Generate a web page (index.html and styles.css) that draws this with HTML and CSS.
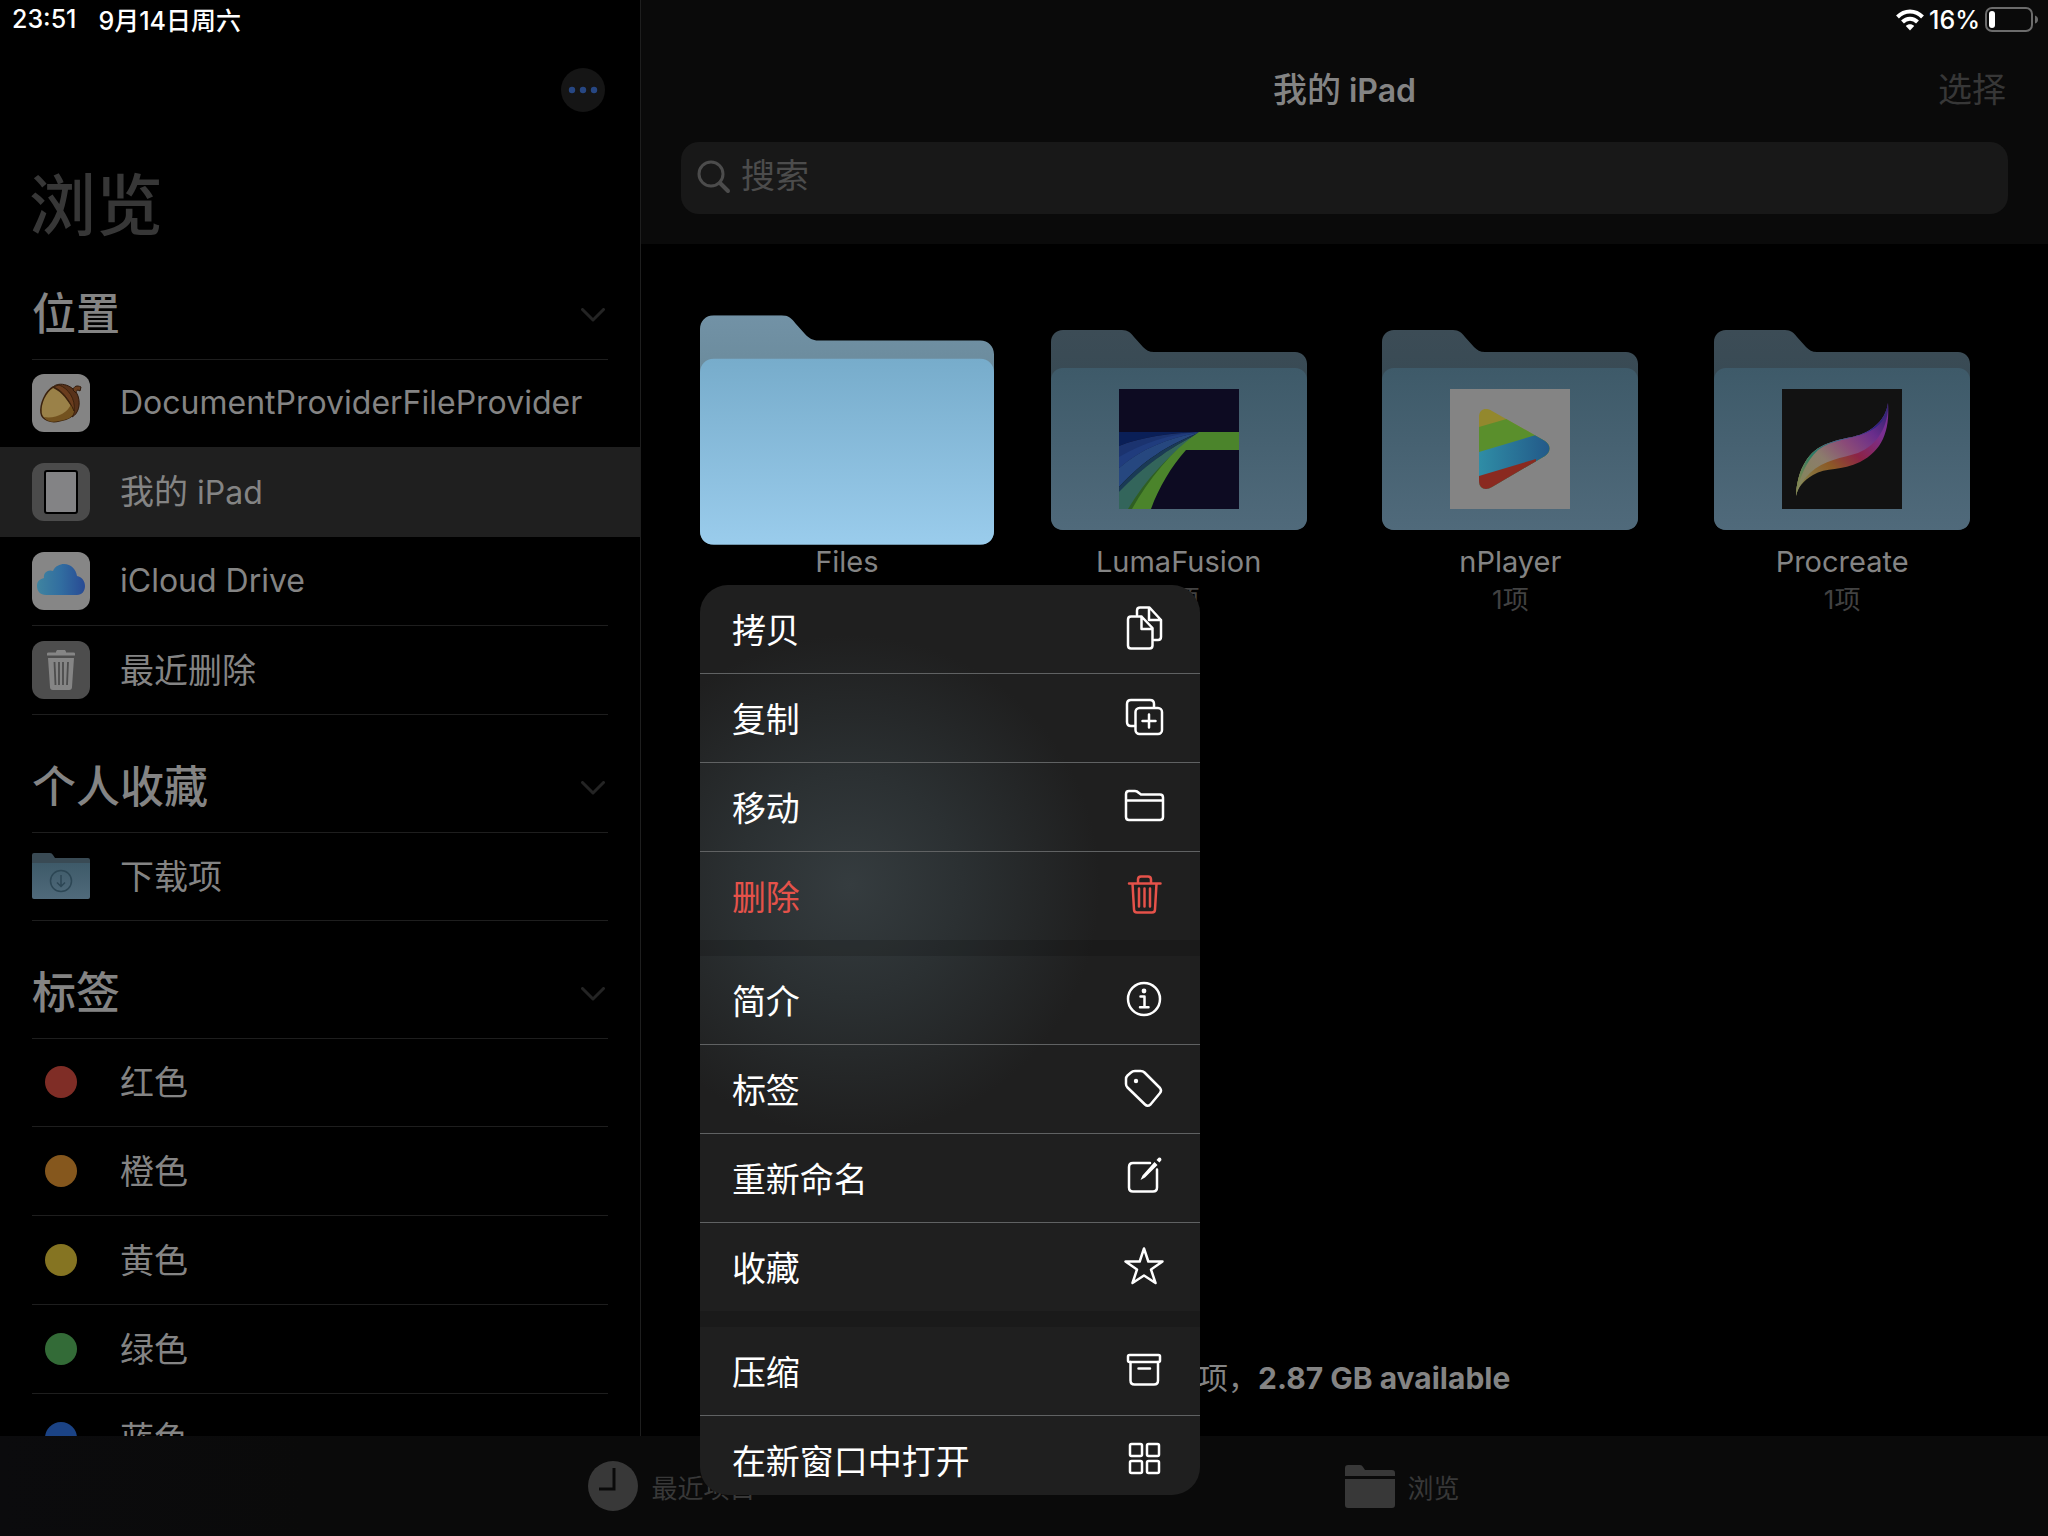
FILE: index.html
```
<!DOCTYPE html>
<html lang="zh-Hans">
<head>
  <meta charset="UTF-8">
  <meta name="viewport" content="width=device-width, initial-scale=1.0">
  <title>文件 - 我的 iPad</title>
  <link rel="stylesheet" href="styles.css">
</head>
<body>
  <!-- 共用图形 -->
  <svg class="defs" width="0" height="0" aria-hidden="true">
    <defs>
      <linearGradient id="backDim" x1="0" y1="0" x2="0" y2="1">
        <stop offset="0" stop-color="#3c4c56"/><stop offset=".25" stop-color="#384a54"/>
      </linearGradient>
      <linearGradient id="frontDim" x1="0" y1="0" x2="0" y2="1">
        <stop offset="0" stop-color="#3e5a69"/><stop offset="1" stop-color="#506a7b"/>
      </linearGradient>
      <linearGradient id="backLit" x1="0" y1="0" x2="0" y2="1">
        <stop offset="0" stop-color="#7292a6"/><stop offset=".25" stop-color="#6b8b9c"/>
      </linearGradient>
      <linearGradient id="frontLit" x1="0" y1="0" x2="0" y2="1">
        <stop offset="0" stop-color="#77accb"/><stop offset="1" stop-color="#9accec"/>
      </linearGradient>
    </defs>
    <symbol id="chevron" viewBox="0 0 24 14">
      <path d="M1.5 1.5 12 12 22.5 1.5" fill="none" stroke="currentColor" stroke-width="3" stroke-linecap="round" stroke-linejoin="round"/>
    </symbol>
    <symbol id="folderBack" viewBox="0 0 256 200">
      <path d="M12 0H71C77 0 80 3 83 7L92 17C95 20 98 22 103 22H244C251 22 256 27 256 34V188C256 195 251 200 244 200H12C5 200 0 195 0 188V12C0 5 5 0 12 0Z"/>
    </symbol>
    <symbol id="folderFront" viewBox="0 0 256 200">
      <path d="M12 38H244C251 38 256 43 256 50V188C256 195 251 200 244 200H12C5 200 0 195 0 188V50C0 43 5 38 12 38Z"/>
    </symbol>
  </svg>

  <aside class="sidebar">
    <div class="status">
      <span>23:51</span>
      <span>9月14日周六</span>
    </div>
    <div class="sidebar-bar">
      <button class="more" aria-label="更多">
        <svg width="44" height="44" viewBox="0 0 44 44"><circle cx="11" cy="22" r="3.2"/><circle cx="22" cy="22" r="3.2"/><circle cx="33" cy="22" r="3.2"/></svg>
      </button>
    </div>
    <h1>浏览</h1>

    <section>
      <button class="group"><span>位置</span><svg class="chevron"><use href="#chevron"/></svg></button>
      <ul>
        <li><a class="row" href="#">
          <svg class="icon" viewBox="0 0 58 58">
            <rect width="58" height="58" rx="12" fill="#848484"/>
            <path d="M21 13C27 7 42 11 46 22C49 31 46 40 40 43Z" fill="#58321a" stroke="#2f190b"/>
            <path d="M41 16C42 12 45 11 49 13L48 17C45 15 44 17 44 19Z" fill="#6a3f20" stroke="#2f190b"/>
            <path d="M21 13C13 18 8 30 9 39C10 46 19 49 27 47C36 46 42 42 42 37C38 27 30 17 21 13Z" fill="#9a8148" stroke="#3b220d" stroke-width="1.5"/>
            <path d="M12 43C23 45 36 39 39 30L42 37C42 43 35 46 27 47C20 49 14 47 12 43Z" fill="#73521f"/>
            <path d="M21 13C29 15 37 25 42 37C44 25 36 14 27 11Z" fill="#6b3d1e" stroke="#3b220d"/>
          </svg>
          <span class="latin">DocumentProviderFileProvider</span></a></li>
        <li><a class="row selected" href="#">
          <svg class="icon" viewBox="0 0 58 58">
            <rect width="58" height="58" rx="12" fill="#4b4b4b"/>
            <rect x="13" y="8" width="32" height="42" rx="2" fill="#838385" stroke="#000" stroke-width="2"/>
          </svg>
          <span>我的<span class="latin"> iPad</span></span></a></li>
        <li><a class="row" href="#">
          <svg class="icon" viewBox="0 0 58 58">
            <defs><linearGradient id="cloud" x1="0" y1="0" x2="1" y2="0"><stop offset="0" stop-color="#3f84a0"/><stop offset=".5" stop-color="#316da0"/><stop offset="1" stop-color="#284a94"/></linearGradient></defs>
            <rect width="58" height="58" rx="12" fill="#868686"/>
            <path d="M14 43C8 43 5 39 5 34C5 29 8 27 12 26C11 20 17 17 21 19C23 14 28 12 32 12C39 12 44 17 45 24C50 25 53 29 53 34C53 39 50 43 45 43Z" fill="url(#cloud)"/>
          </svg>
          <span class="latin">iCloud Drive</span></a></li>
        <li><a class="row" href="#">
          <svg class="icon" viewBox="0 0 58 58">
            <rect width="58" height="58" rx="12" fill="#4d4d4d"/>
            <path d="M15 14V12.500Q15 11.500 16.500 11.500H24C24 9.500 25 9 26 9H32C33 9 34 9.500 34 11.500H41.500Q43 11.500 43 12.500V14.500H15ZM16 17H42L40 46Q40 49 37 49H21Q18 49 18 46Z" fill="#858585"/>
            <path d="M22.500 21 23.500 44M27 21V44M31 21V44M36 21 35 44" stroke="#4d4d4d" stroke-width="1.800"/>
          </svg>
          <span>最近删除</span></a></li>
      </ul>
    </section>

    <section>
      <button class="group"><span>个人收藏</span><svg class="chevron"><use href="#chevron"/></svg></button>
      <ul>
        <li><a class="row" href="#">
          <svg class="icon" viewBox="0 0 58 58">
            <path d="M2 6H18Q20 6 21 8L23 11H56Q58 11 58 13V20H0V8Q0 6 2 6Z" fill="#394a54"/>
            <path d="M0 16H58V50Q58 52 56 52H2Q0 52 0 50Z" fill="url(#frontDim)"/>
            <circle cx="29" cy="34" r="10.500" fill="none" stroke="#2c4654" stroke-width="1.500"/>
            <path d="M29 28V39M25 35.500 29 39.500 33 35.500" fill="none" stroke="#2c4654" stroke-width="1.500"/>
          </svg>
          <span>下载项</span></a></li>
      </ul>
    </section>

    <section>
      <button class="group"><span>标签</span><svg class="chevron"><use href="#chevron"/></svg></button>
      <ul>
        <li><a class="row" href="#"><i class="tag red"></i><span>红色</span></a></li>
        <li><a class="row" href="#"><i class="tag orange"></i><span>橙色</span></a></li>
        <li><a class="row" href="#"><i class="tag yellow"></i><span>黄色</span></a></li>
        <li><a class="row" href="#"><i class="tag green"></i><span>绿色</span></a></li>
        <li><a class="row" href="#"><i class="tag blue"></i><span>蓝色</span></a></li>
      </ul>
    </section>
  </aside>

  <main>
    <header>
      <div class="status right">
        <svg width="28" height="22" viewBox="0 0 28 22" fill="none" stroke="#fff" stroke-width="4">
          <path d="M1.500 8C8.500 .8 19.500 .8 26.500 8"/>
          <path d="M6.500 13C10.700 8.700 17.300 8.700 21.500 13"/>
          <path d="M14 21.500 9.800 17C12 14.600 16 14.600 18.200 17Z" fill="#fff" stroke="none"/>
        </svg>
        <span>16%</span>
        <svg width="54" height="26" viewBox="0 0 54 26">
          <rect x="1" y="1" width="46" height="23" rx="6" fill="none" stroke="#6c6c6c" stroke-width="2"/>
          <rect x="4" y="4" width="6" height="17" rx="3" fill="#fff"/>
          <path d="M50 8.500Q53 9.500 53 12.500T50 16.500Z" fill="#6c6c6c"/>
        </svg>
      </div>
      <div class="titlebar">
        <h2>我的<span class="latin"> iPad</span></h2>
        <button class="select">选择</button>
      </div>
      <label class="search">
        <svg width="34" height="34" viewBox="0 0 34 34" fill="none" stroke="#4c4c4c" stroke-linecap="round">
          <circle cx="14" cy="14" r="12" stroke-width="3"/><path d="M23 23 31 31" stroke-width="4"/>
        </svg>
        <input type="search" placeholder="搜索" aria-label="搜索">
      </label>
    </header>

    <ul class="files">
      <li class="file active">
        <div class="cover">
          <svg class="folder lit" viewBox="0 0 256 200">
            <use href="#folderBack" fill="url(#backLit)"/><use href="#folderFront" fill="url(#frontLit)"/>
          </svg>
          <!-- 长按菜单 -->
          <div class="menu" role="menu">
            <div class="menu-group">
              <button role="menuitem">拷贝
                <svg viewBox="0 0 44 44"><path d="M19.500 10.500H9Q6 10.500 6 13.500V39.500Q6 42.500 9 42.500H27.500Q30.500 42.500 30.500 39.500V22ZM19.500 10.500V23H30.500"/><path d="M15 9V4.500Q15 1.500 18 1.500H27.500L39 14V31Q39 34 36 34H32M27 1.500V14H39"/></svg>
              </button>
              <button role="menuitem">复制
                <svg viewBox="0 0 44 44"><rect x="13.500" y="13" width="26.500" height="26" rx="4"/><path d="M13 31H9Q5 31 5 27V9Q5 5 9 5H28Q32 5 32 9V12M27 19.500V32.500M20.500 26H33.500"/></svg>
              </button>
              <button role="menuitem">移动
                <svg viewBox="0 0 44 44"><path d="M4 16.500V10Q4 7 7 7H13Q15 7 17 9L19 10.500H38Q41 10.500 41 13.500V33Q41 36 38 36H7Q4 36 4 33ZM4 16.500H41"/></svg>
              </button>
              <button role="menuitem" class="danger">删除
                <svg viewBox="0 0 44 44"><path d="M7 10.500H38.500M16 10V6.500Q16 3.500 19 3.500H26Q29 3.500 29 6.500V10M10.500 10.500 12 36.500Q12 39.500 15 39.500H30Q33 39.500 33 36.500L34.500 10.500M17 15.500V33.500M22.500 15.500V33.500M28 15.500V33.500"/></svg>
              </button>
            </div>
            <div class="menu-group">
              <button role="menuitem">简介
                <svg viewBox="0 0 44 44"><circle cx="22" cy="22" r="16"/><circle class="dot" cx="22" cy="14" r="2.400"/><path d="M18.500 19.500H22.500V30M18 30.200H26.500"/></svg>
              </button>
              <button role="menuitem">标签
                <svg viewBox="0 0 44 44"><path d="M4 13Q4 11 5.500 9.500L9 6.500Q10.500 5 13 5H18.500Q21 5 22.500 6.500L38 22Q40 24.500 38 27L28.500 38.500Q25.500 41 23 38.500L5.500 21.500Q4 20 4 18Z"/><circle class="dot" cx="14" cy="15" r="2.200"/></svg>
              </button>
              <button role="menuitem">重新命名
                <svg viewBox="0 0 44 44"><path d="M28 8H11Q7 8 7 12V32.500Q7 36.500 11 36.500H31Q35 36.500 35 32.500V14.500"/><path class="dot" d="M18.500 25 20.500 20.500 32.500 7 35.500 10 23 22.500ZM34.500 5 36.500 2.700Q39.500 2 39.500 5L37.500 7.500Z"/></svg>
              </button>
              <button role="menuitem">收藏
                <svg viewBox="0 0 44 44"><path d="M22 4.500 26.300 17.500H40.500L29 25.500 33.500 39 22 31.500 10.500 39 15 25.500 3.500 17.500H17.700Z"/></svg>
              </button>
            </div>
            <div class="menu-group">
              <button role="menuitem">压缩
                <svg viewBox="0 0 44 44"><rect x="6" y="7" width="32" height="7" rx="1.500"/><path d="M8.500 14V32.500Q8.500 36.500 12.500 36.500H32Q36 36.500 36 32.500V14M16.500 20.500H28"/></svg>
              </button>
              <button role="menuitem">在新窗口中打开
                <svg viewBox="0 0 44 44"><rect x="8" y="7" width="12" height="12" rx="1.500"/><rect x="25" y="7" width="12" height="12" rx="1.500"/><rect x="8" y="24" width="12" height="12" rx="1.500"/><rect x="25" y="24" width="12" height="12" rx="1.500"/></svg>
              </button>
            </div>
          </div>
        </div>
        <p class="name">Files</p>
      </li>
      <li class="file">
        <div class="cover">
          <svg class="folder" viewBox="0 0 256 200">
            <use href="#folderBack" fill="url(#backDim)"/><use href="#folderFront" fill="url(#frontDim)"/>
            <g transform="translate(68 59)">
              <rect width="120" height="120" fill="#0d0b22"/>
              <path d="M0 43H82C50 44 22 48 0 57Z" fill="#0a1f57"/>
              <path d="M0 57C22 48 50 44 82 43C48 49 22 60 0 79Z" fill="#1b336f"/>
              <path d="M0 68C24 54 50 45 82 43C48 49 22 60 0 79Z" fill="#203c7d"/>
              <path d="M0 79C22 60 48 49 82 43C48 56 24 72 0 98Z" fill="#26477f"/>
              <path d="M0 98C24 72 48 56 82 43C48 60 24 78 0 104Z" fill="#1a3a55"/>
              <path d="M0 103C24 78 48 60 82 43C52 66 28 92 11 120H0Z" fill="#33655b"/>
              <path d="M9 120C26 92 50 64 82 43L76 50C50 72 32 96 18 120Z" fill="#2f5f22"/>
              <path d="M13 120C30 90 52 62 80 43H120V61H67C52 78 40 98 32 120Z" fill="#4b842b"/>
            </g>
          </svg>
        </div>
        <p class="name">LumaFusion</p>
        <p class="count">2项</p>
      </li>
      <li class="file">
        <div class="cover">
          <svg class="folder" viewBox="0 0 256 200">
            <defs>
              <clipPath id="play"><path d="M29 28C29 20 36 18 42 22L95 52C101 56 101 63 95 67L42 98C36 102 29 100 29 92Z"/></clipPath>
              <linearGradient id="playBlue"><stop offset="0" stop-color="#2f8da6"/><stop offset="1" stop-color="#1f4a80"/></linearGradient>
            </defs>
            <use href="#folderBack" fill="url(#backDim)"/><use href="#folderFront" fill="url(#frontDim)"/>
            <g transform="translate(68 59)">
              <rect width="120" height="120" fill="#848484"/>
              <g clip-path="url(#play)">
                <rect width="120" height="120" fill="#93882d"/>
                <path d="M29 38 60 29 120 10V120H29Z" fill="#5a8f2c"/>
                <path d="M29 63 86 46H120V120H29Z" fill="url(#playBlue)"/>
                <path d="M29 87 86 70V120H29Z" fill="#8a2a20"/>
              </g>
            </g>
          </svg>
        </div>
        <p class="name">nPlayer</p>
        <p class="count">1项</p>
      </li>
      <li class="file">
        <div class="cover">
          <svg class="folder" viewBox="0 0 256 200">
            <defs>
              <linearGradient id="feather" x1="0" y1="1" x2="1" y2="0">
                <stop offset=".1" stop-color="#85855c"/><stop offset=".35" stop-color="#8c7c6c"/><stop offset=".55" stop-color="#8a4a78"/><stop offset=".75" stop-color="#6a2d8c"/><stop offset="1" stop-color="#25206a"/>
              </linearGradient>
              <linearGradient id="featherTop" x1="0" y1="1" x2="1" y2="0">
                <stop offset=".1" stop-color="#7c8650"/><stop offset=".3" stop-color="#2d7c62"/><stop offset=".55" stop-color="#2a6a92"/><stop offset=".8" stop-color="#2c2384"/><stop offset="1" stop-color="#3a2a70"/>
              </linearGradient>
              <linearGradient id="featherLow" x1="0" y1="1" x2="1" y2="0">
                <stop offset=".1" stop-color="#85804a"/><stop offset=".35" stop-color="#8c5a26"/><stop offset=".55" stop-color="#8c2346"/><stop offset=".8" stop-color="#7a2f92"/>
              </linearGradient>
            </defs>
            <use href="#folderBack" fill="url(#backDim)"/><use href="#folderFront" fill="url(#frontDim)"/>
            <g transform="translate(68 59)">
              <rect width="120" height="120" fill="#121212"/>
              <path d="M14 107C15 84 24 64 42 56C62 47 78 50 92 38C101 31 105 22 106 14C108 42 100 62 78 73C60 82 44 78 31 86C21 92 16 98 14 107Z" fill="url(#featherLow)"/>
              <path d="M14 107C15 84 24 64 42 56C62 47 78 50 92 38C101 31 105 22 106 14C107 36 96 56 76 64C60 69 42 71 28 84C20 92 16 99 14 107Z" fill="url(#feather)"/>
              <path d="M14 107C15 84 24 64 42 56C62 47 78 50 92 38C101 31 105 22 106 14C106 28 98 38 84 44C68 51 50 50 36 61C24 72 17 90 14 107Z" fill="url(#featherTop)"/>
            </g>
          </svg>
        </div>
        <p class="name">Procreate</p>
        <p class="count">1项</p>
      </li>
    </ul>

    <p class="summary"><span>4项，</span>2.87 GB available</p>
  </main>

  <nav class="tabs">
    <a href="#">
      <svg width="50" height="50" viewBox="0 0 50 50"><circle cx="25" cy="25" r="25" fill="#383838"/><path d="M26 7V28H11" fill="none" stroke="#0a0a0a" stroke-width="3"/></svg>
      最近项目</a>
    <a href="#">
      <svg width="50" height="50" viewBox="0 0 50 50" fill="#383838"><path d="M3 4H15Q17 4 18 6L20 9H47Q50 9 50 12V15H0V7Q0 4 3 4ZM0 18H50V44Q50 47 47 47H3Q0 47 0 44Z"/></svg>
      浏览</a>
  </nav>
</body>
</html>
```
FILE: styles.css
```
* { box-sizing: border-box; }
body {
  margin: 0;
  height: 100vh;
  display: grid;
  grid-template-columns: 641px 1fr;
  grid-template-rows: minmax(0, 1fr) 100px;
  background: #000;
  color: #848484;
  font-family: Inter, "Noto Sans CJK SC", sans-serif;
  font-size: 34px;
  overflow: hidden;
}
h1, h2, p, ul { margin: 0; padding: 0; }
ul { list-style: none; }
a { color: inherit; text-decoration: none; }
button, input {
  font: inherit;
  color: inherit;
  background: none;
  border: 0;
  padding: 0;
}
svg { flex: none; display: block; }
.defs { position: absolute; }
.latin { font-size: 32px; }

.status {
  display: flex;
  align-items: center;
  gap: 22px;
  height: 40px;
  padding: 0 12px 2px;
  color: #fff;
  font-size: 25px;
  font-weight: 500;
}
.status.right {
  justify-content: flex-end;
  gap: 5px;
  padding: 0 9px;
}

/* 侧边栏 */
.sidebar {
  border-right: 1px solid #1e1e1e;
  overflow: hidden;
}
.sidebar-bar {
  display: flex;
  justify-content: flex-end;
  align-items: center;
  height: 100px;
  padding: 0 35px;
}
.more {
  border-radius: 50%;
  background: #151515;
}
.more svg { fill: #274783; }
h1 {
  height: 102px;
  padding: 16px 0 0 29px;
  color: #373737;
  font-size: 67px;
  font-weight: 500;
  line-height: 100px;
}
.group {
  display: flex;
  justify-content: space-between;
  align-items: center;
  width: calc(100% - 64px);
  height: 118px;
  margin: 0 32px;
  padding-top: 28px;
  border-bottom: 1px solid #1e1e1e;
  font-size: 44px;
  font-weight: 500;
}
.group span { padding-bottom: 8px; }
.group + ul { margin-top: -1px; }
.chevron {
  width: 24px;
  height: 14px;
  margin-right: 3px;
  color: #242424;
}
.row {
  display: flex;
  align-items: center;
  gap: 30px;
  height: 89px;
  margin: 0 32px;
  border-bottom: 1px solid #1e1e1e;
  white-space: nowrap;
}
.row > span { padding-bottom: 4px; }
.row > .latin { padding-bottom: 1px; }
.selected {
  height: 90px;
  margin: -1px 0 0;
  padding: 0 32px;
  border-color: #1f1f1f;
  background: #1f1f1f;
}
.icon {
  width: 58px;
  height: 58px;
}
.tag {
  width: 32px;
  height: 32px;
  margin: 0 13px;
  border-radius: 50%;
}
.red { background: #7f2d26; }
.orange { background: #85571d; }
.yellow { background: #857422; }
.green { background: #336b37; }
.blue { background: #1b4385; }

/* 文件区 */
main {
  display: flex;
  flex-direction: column;
  position: relative;
  z-index: 1;
}
header {
  height: 244px;
  background: #0a0a0a;
}
.titlebar {
  display: grid;
  grid-template-columns: 1fr auto 1fr;
  align-items: center;
  height: 102px;
  padding: 0 42px 8px;
}
h2 {
  grid-column: 2;
  font-size: 34px;
  font-weight: 500;
}
h2 .latin { font-weight: 600; }
.select {
  justify-self: end;
  color: #373737;
}
.search {
  display: flex;
  align-items: center;
  gap: 10px;
  height: 72px;
  margin: 0 40px;
  padding: 0 16px 2px;
  border-radius: 18px;
  background: #181818;
}
.search input {
  flex: 1;
  padding-bottom: 3px;
  outline: none;
}
.search input::placeholder { color: #4c4c4c; }

.files {
  display: grid;
  grid-template-columns: repeat(4, 1fr);
  padding: 71px 40px 0;
}
.file { text-align: center; }
.cover {
  position: relative;
  display: grid;
  place-items: center;
  width: 294px;
  height: 230px;
  margin: 0 auto;
}
.folder {
  width: 256px;
  height: 200px;
}
.folder.lit {
  width: 294px;
  height: 230px;
}
.name {
  font-size: 29px;
  line-height: 34px;
}
.count {
  color: #424242;
  font-size: 26px;
  line-height: 42px;
}

.menu {
  position: absolute;
  top: calc(100% + 40px);
  left: 0;
  z-index: 2;
  width: 500px;
  height: 910px;
  overflow: hidden;
  border-radius: 28px;
  background: radial-gradient(circle 250px at 150px 300px, #353c3f, #2b3032 45%, #1f1f1f);
  color: #fff;
  text-align: left;
}
.menu-group + .menu-group { border-top: 16px solid rgba(0, 0, 0, 0.15); }
.menu button {
  display: flex;
  justify-content: space-between;
  align-items: center;
  width: 100%;
  height: 89px;
  padding: 0 34px 2px 32px;
}
.menu button:first-child { height: 88px; }
.menu button + button { border-top: 1px solid #606263; }
.menu .danger { color: #e5524a; }
.menu svg {
  width: 44px;
  height: 44px;
  fill: none;
  stroke: currentColor;
  stroke-width: 2.5;
  stroke-linecap: round;
  stroke-linejoin: round;
}
.menu .dot {
  fill: currentColor;
  stroke: none;
}

.summary {
  margin-top: auto;
  padding-bottom: 38px;
  font-size: 30px;
  font-weight: 700;
  line-height: 40px;
  text-align: center;
}
.summary span { font-weight: 400; }

.tabs {
  grid-column: 1 / -1;
  display: flex;
  justify-content: center;
  align-items: center;
  gap: 589px;
  background: linear-gradient(90deg, #0b0b0d, #0a0a0a 15%);
  color: #383838;
  font-size: 26px;
}
.tabs a {
  display: flex;
  align-items: center;
  gap: 13px;
}
```
